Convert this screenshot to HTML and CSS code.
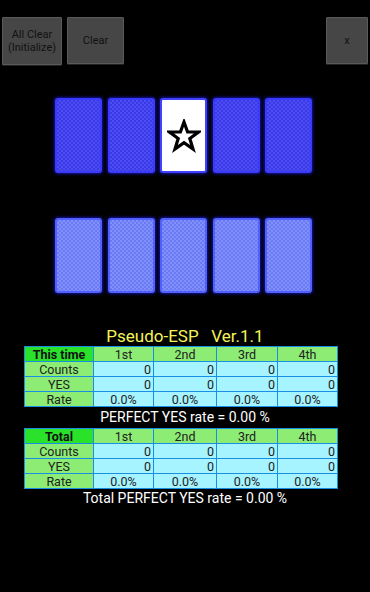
FILE: index.html
```html
<!DOCTYPE html>
<html>
<head>
<meta charset="utf-8">
<link rel="stylesheet" href="styles.css">
</head>
<body>
<div class="topbar">
  <button class="btn btn-all">All Clear<br>(Initialize)</button>
  <button class="btn btn-clear">Clear</button>
  <span class="spacer"></span>
  <button class="btn btn-x">x</button>
</div>

<div class="cards row1">
  <div class="card back"></div>
  <div class="card back"></div>
  <div class="card face">
    <svg width="34" height="34" viewBox="0 0 34 34">
      <polygon points="17,3 20.6,13 31.5,13 22.8,19.5 26,30 17,23.7 8,30 11.2,19.5 2.5,13 13.4,13" fill="#fff" stroke="#000" stroke-width="3.2" stroke-linejoin="miter"/>
    </svg>
  </div>
  <div class="card back"></div>
  <div class="card back"></div>
</div>

<div class="cards row2">
  <div class="card back light"></div>
  <div class="card back light"></div>
  <div class="card back light"></div>
  <div class="card back light"></div>
  <div class="card back light"></div>
</div>

<div class="title">Pseudo-ESP&nbsp;&nbsp;&nbsp;Ver.1.1</div>

<table class="stats">
  <tr><th class="corner">This time</th><th>1st</th><th>2nd</th><th>3rd</th><th>4th</th></tr>
  <tr><td class="label">Counts</td><td class="num">0</td><td class="num">0</td><td class="num">0</td><td class="num">0</td></tr>
  <tr><td class="label">YES</td><td class="num">0</td><td class="num">0</td><td class="num">0</td><td class="num">0</td></tr>
  <tr><td class="label">Rate</td><td class="rate">0.0%</td><td class="rate">0.0%</td><td class="rate">0.0%</td><td class="rate">0.0%</td></tr>
</table>
<div class="perfect">PERFECT YES rate = 0.00 %</div>

<table class="stats">
  <tr><th class="corner">Total</th><th>1st</th><th>2nd</th><th>3rd</th><th>4th</th></tr>
  <tr><td class="label">Counts</td><td class="num">0</td><td class="num">0</td><td class="num">0</td><td class="num">0</td></tr>
  <tr><td class="label">YES</td><td class="num">0</td><td class="num">0</td><td class="num">0</td><td class="num">0</td></tr>
  <tr><td class="label">Rate</td><td class="rate">0.0%</td><td class="rate">0.0%</td><td class="rate">0.0%</td><td class="rate">0.0%</td></tr>
</table>
<div class="perfect total">Total PERFECT YES rate = 0.00 %</div>
</body>
</html>
```

FILE: styles.css
```css
html, body {
  margin: 0;
  padding: 0;
  background: #000;
  font-family: Roboto, "Noto Sans", sans-serif;
  width: 370px;
  height: 592px;
  overflow: hidden;
}

.topbar {
  display: flex;
  align-items: flex-start;
  padding: 17px 2px 0 2px;
  gap: 5px;
}
.spacer { flex: 1; }

.btn {
  background: #464646;
  border: 1px solid #5a5a5a;
  border-radius: 1px;
  color: #111;
  font-family: Roboto, "Noto Sans", sans-serif;
  font-size: 11px;
  line-height: 13px;
  padding: 0;
  box-shadow: 0 1px 0 #222;
}
.btn-all { width: 60px; height: 48px; }
.btn-clear { width: 57px; height: 47px; }
.btn-x { width: 42px; height: 47px; }

.cards {
  display: flex;
  gap: 5.5px;
  padding-left: 55px;
}
.row1 { margin-top: 33px; }
.row2 { margin-top: 45px; }

.card {
  width: 43px;
  height: 71px;
  border: 2px solid #3a3aff;
  border-radius: 3px;
  box-shadow: 0 0 3px 1px #1414a0;
}
.back {
  background: repeating-conic-gradient(#4c4cf8 0 25%, #3a3ae0 0 50%) 0 0 / 4px 4px;
}
.back.light {
  background: repeating-conic-gradient(#8090ff 0 25%, #6c7af2 0 50%) 0 0 / 4px 4px;
  border-color: #5060ff;
}
.face {
  background: #fff;
  display: flex;
  align-items: center;
  justify-content: center;
  border-color: #4040ff;
}

.title {
  margin-top: 34px;
  text-align: center;
  color: #f4f45a;
  font-size: 17px;
  line-height: 19px;
}

.stats {
  border-collapse: collapse;
  margin-left: 24px;
  width: 314px;
  table-layout: fixed;
  font-size: 12.5px;
}
.stats tr { height: 15px; }
.stats th, .stats td {
  border: 1.5px solid #1a8ee0;
  line-height: 13px;
  padding: 0 2px;
  font-weight: normal;
  color: #222;
}
.stats th {
  background: #8cec74;
  text-align: center;
}
.stats th:nth-child(1) { width: 64px; }
.stats th:nth-child(2) { width: 55px; }
.stats th:nth-child(3) { width: 58px; }
.stats th:nth-child(4) { width: 56px; }
.stats th.corner {
  background: #2ae22a;
  font-weight: bold;
  color: #111;
}
.stats td.label {
  background: #8cec74;
  text-align: center;
}
.stats td.num, .stats td.rate {
  background: #a6f4ff;
}
.stats td.num { text-align: right; }
.stats td.rate { text-align: center; }

.perfect {
  text-align: center;
  color: #fff;
  font-size: 14px;
  line-height: 21px;
}
.perfect.total { line-height: 19px; }
```
